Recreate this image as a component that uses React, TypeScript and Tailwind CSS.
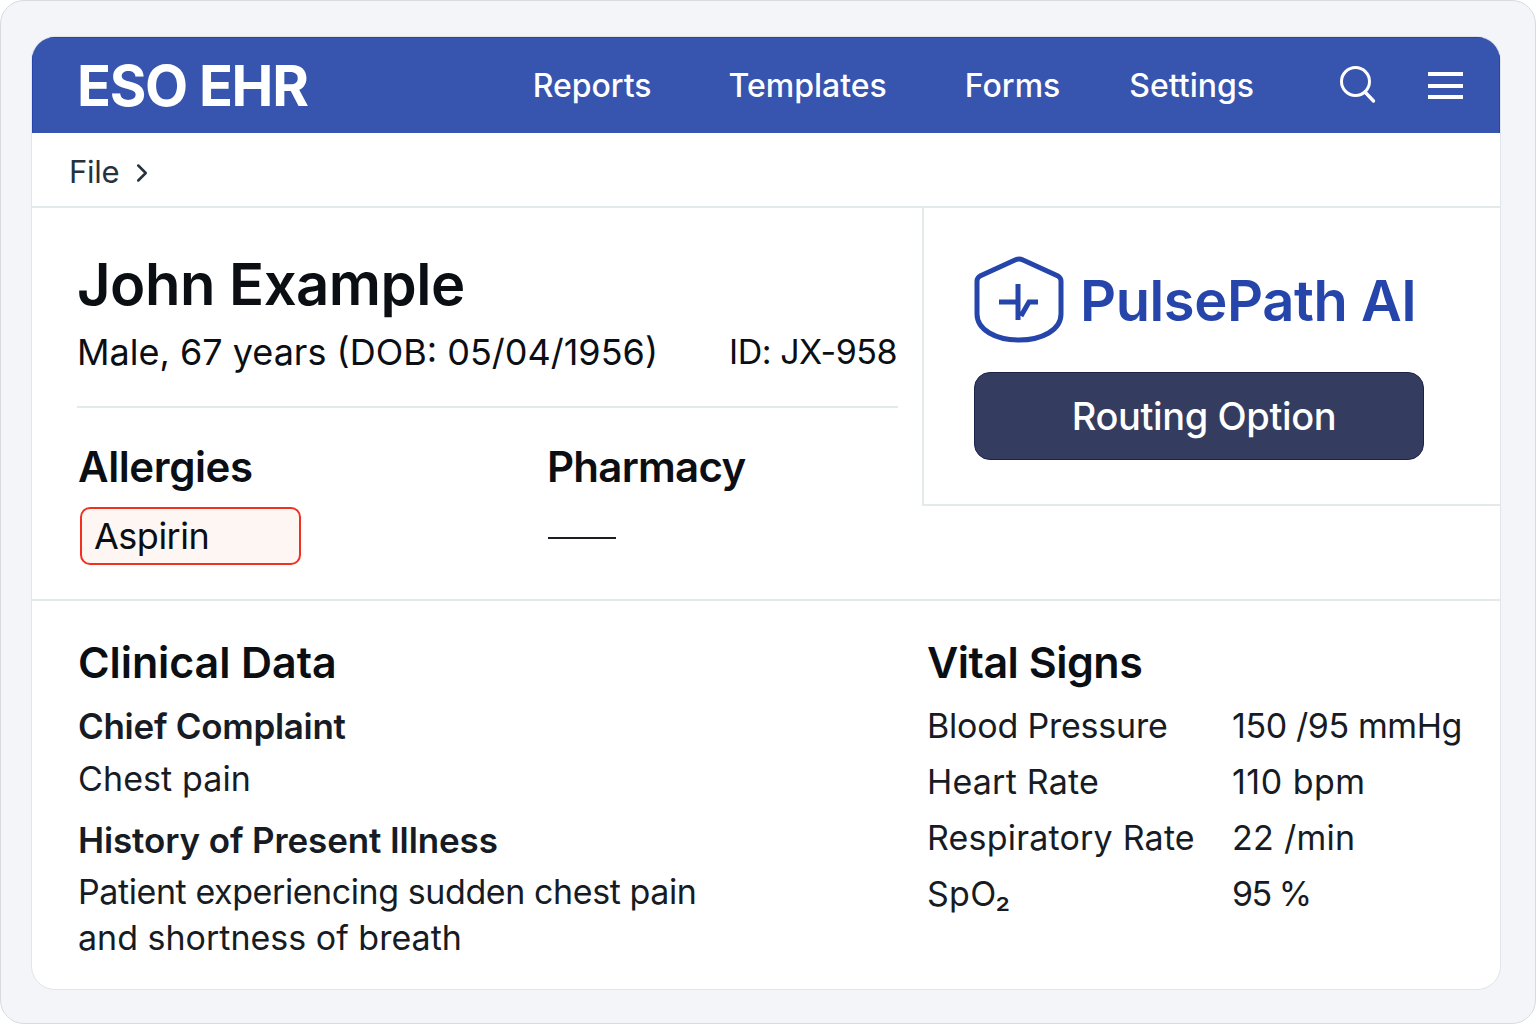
import React from 'react'
import { ChevronRight } from 'lucide-react'

const NAV_LINKS = [
  { label: 'Reports', cls: 'ml-[225px]' },
  { label: 'Templates', cls: 'ml-[77px]' },
  { label: 'Forms', cls: 'ml-[78px]' },
  { label: 'Settings', cls: 'ml-[69px]' },
]

const VITALS = [
  { label: 'Blood Pressure', labelCls: 'tracking-[-0.2px]', value: '150 /95 mmHg', valueCls: 'tracking-[-0.4px]' },
  { label: 'Heart Rate', labelCls: 'tracking-[0.2px]', value: '110 bpm', valueCls: 'tracking-[0.5px]' },
  { label: 'Respiratory Rate', labelCls: 'tracking-[0.2px]', value: '22 /min', valueCls: 'tracking-[0.3px]' },
  { label: 'SpO₂', labelCls: 'tracking-[0.3px]', value: '95 %', valueCls: 'tracking-[-1.5px]' },
]

function ShieldLogo() {
  return (
    <svg width="90" height="88" viewBox="0 0 90 88" fill="none" className="shrink-0">
      <path
        d="M41 4 Q45 2 49 4 L84 20 Q87 22 87 25 V58 C87 74 68 84 45 84 C22 84 3 74 3 58 V25 Q3 22 6 20 Z"
        stroke="#2545ab"
        strokeWidth="5"
        strokeLinejoin="round"
      />
      <path d="M25 46 H44 M44 28 V64 M47 60 L55 46 H64" stroke="#2545ab" strokeWidth="5" />
    </svg>
  )
}

function SearchIcon() {
  return (
    <svg width="38" height="40" viewBox="0 0 38 40" fill="none">
      <circle cx="16.5" cy="15.5" r="14" stroke="white" strokeWidth="3" />
      <path d="M26 26 L34.5 35" stroke="white" strokeWidth="3.4" strokeLinecap="round" />
    </svg>
  )
}

export default function App() {
  return (
    <div className="w-[1536px] h-[1024px] bg-white overflow-hidden font-['Inter',sans-serif] text-[#0b0f14]">
      <div className="h-full bg-[#f3f5f9] border border-[#d9dadd] rounded-[24px] pt-[35px] pl-[30px] pr-[34px]">
        <div className="h-[954px] bg-white border border-[#e1e5ea] rounded-[24px] overflow-hidden">
          {/* Top bar */}
          <div className="h-[96px] bg-[#3754af] border-t border-x border-[#2545ab] flex items-center pl-[44px] text-white">
            <span className="text-[56px] font-bold tracking-[-1.3px] leading-none whitespace-nowrap">ESO EHR</span>
            {NAV_LINKS.map((link) => (
              <span key={link.label} className={`${link.cls} text-[32px] font-medium whitespace-nowrap`}>
                {link.label}
              </span>
            ))}
            <span className="ml-[85px] flex"><SearchIcon /></span>
            <div className="ml-[51px] flex flex-col gap-[7.5px]">
              <div className="w-[35px] h-[4px] bg-white" />
              <div className="w-[35px] h-[4px] bg-white" />
              <div className="w-[35px] h-[4px] bg-white" />
            </div>
          </div>

          {/* Breadcrumb */}
          <div className="h-[75px] border-b-2 border-[#e4e9ec] flex items-center pl-[37px] pt-[6px] text-[31px] text-[#27323c]">
            <span className="tracking-[-0.3px]">File</span>
            <ChevronRight size={30} strokeWidth={2} className="ml-[8px]" />
          </div>

          {/* Patient */}
          <div className="h-[393px] border-b-2 border-[#e4e9ec] flex">
            <div className="w-[890px] pl-[45px] pr-[24px] pt-[41px]">
              <h1 className="text-[58px] font-semibold tracking-[-0.5px] leading-[70px]">John Example</h1>
              <div className="mt-[9px] pb-[30px] pr-[1px] border-b-2 border-[#e4e9ec] flex justify-between items-center text-[36px] leading-[48px] whitespace-nowrap">
                <span>Male, 67 years (DOB: 05/04/1956)</span>
                <span className="text-[34px] tracking-[-0.5px]">ID: JX-958</span>
              </div>
              <div className="mt-[32px] flex">
                <div className="w-[470px]">
                  <h2 className="pl-px text-[42px] font-semibold tracking-[-0.4px] leading-[54px]">Allergies</h2>
                  <div className="mt-[13px] ml-[3px] w-[221px] h-[58px] border-2 border-[#f2301f] bg-[#fdf6f3] rounded-[10px] flex items-center pl-[12px] text-[36px] tracking-[-0.5px]">
                    Aspirin
                  </div>
                </div>
                <div>
                  <h2 className="text-[42px] font-semibold tracking-[-0.75px] leading-[54px]">Pharmacy</h2>
                  <div className="mt-[43px] ml-px w-[68px] h-[2px] bg-[#1a1e24]" />
                </div>
              </div>
            </div>
            <div className="flex-1 self-start h-[298px] border-l-2 border-b-2 border-[#e4e9ec] pl-[50px] pt-[48px]">
              <div className="flex items-center gap-[16px]">
                <ShieldLogo />
                <span className="pt-[2px] text-[56px] font-semibold text-[#2545ab] tracking-[-0.4px] whitespace-nowrap">PulsePath AI</span>
              </div>
              <button className="mt-[28px] w-[450px] h-[88px] pl-[10px] bg-[#343c5f] border border-[#1c2348] rounded-[16px] text-white text-[38px] font-medium tracking-[-0.4px]">
                Routing Option
              </button>
            </div>
          </div>

          {/* Clinical data and vitals */}
          <div className="flex pt-[32px]">
            <div className="w-[895px] pl-[46px]">
              <h2 className="text-[43px] font-semibold tracking-[-0.1px] leading-[58px]">Clinical Data</h2>
              <h3 className="mt-[13px] text-[35px] font-semibold tracking-[-0.3px] leading-[44px] text-[#171c24]">Chief Complaint</h3>
              <p className="mt-[9px] text-[34px] tracking-[0.1px] leading-[44px] text-[#171c24]">Chest pain</p>
              <h3 className="mt-[17px] text-[35px] font-semibold tracking-[-0.12px] leading-[44px] text-[#171c24]">History of Present Illness</h3>
              <p className="mt-[7px] text-[34px] leading-[46px] text-[#171c24]">
                <span className="tracking-[-0.42px]">Patient experiencing sudden chest pain</span>
                <br />
                and shortness of breath
              </p>
            </div>
            <div className="flex-1">
              <h2 className="text-[43px] font-semibold tracking-[-0.5px] leading-[58px]">Vital Signs</h2>
              <div className="mt-[13px] flex flex-col">
                {VITALS.map((v) => (
                  <div key={v.label} className="flex h-[56px] text-[34px] leading-[44px] text-[#171c24] whitespace-nowrap">
                    <span className={`w-[305px] ${v.labelCls}`}>{v.label}</span>
                    <span className={v.valueCls}>{v.value}</span>
                  </div>
                ))}
              </div>
            </div>
          </div>
        </div>
      </div>
    </div>
  )
}
